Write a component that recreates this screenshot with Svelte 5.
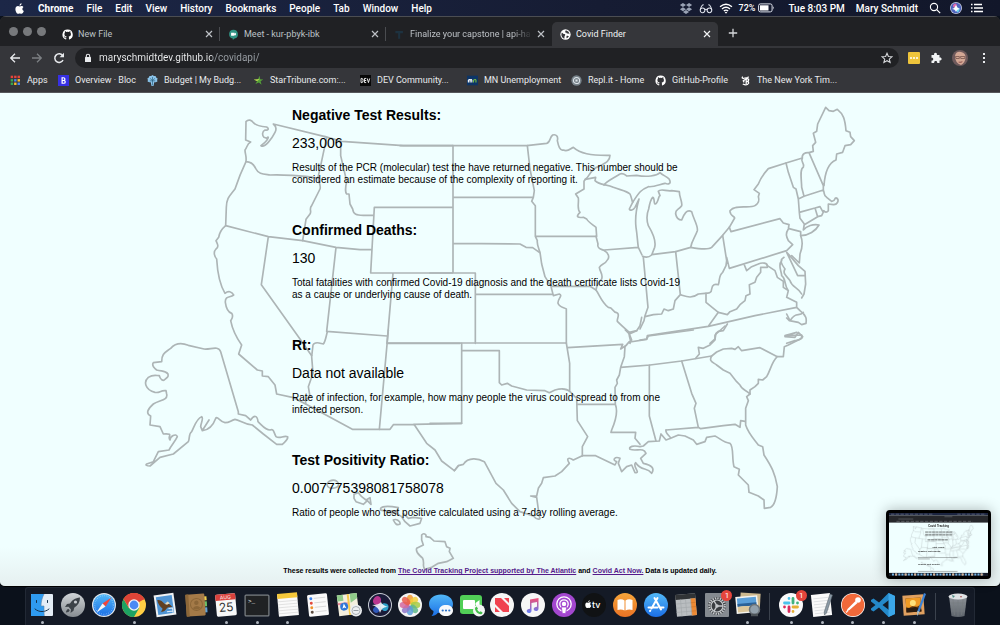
<script>
  const menus = ['File', 'Edit', 'View', 'History', 'Bookmarks', 'People', 'Tab', 'Window', 'Help'];

  const github = '<path fill="#fff" d="M8 .7a7.4 7.4 0 0 0-2.3 14.4c.4 0 .5-.2.5-.4v-1.5c-2 .5-2.500-.9-2.500-.9-.4-.9-.8-1.100-.8-1.100-.7-.5 0-.5 0-.5.8.1 1.200.8 1.200.8.7 1.200 1.900.8 2.300.6 0-.5.3-.8.5-1-1.700-.2-3.400-.8-3.400-3.700 0-.8.3-1.500.8-2 0-.2-.3-1 .1-2 0 0 .6-.2 2 .8a7 7 0 0 1 3.700 0c1.400-1 2-.8 2-.8.4 1 .1 1.800.1 2 .5.5.8 1.200.8 2 0 2.900-1.700 3.500-3.400 3.700.3.2.5.7.5 1.400v2.200c0 .2.100.5.500.4A7.400 7.400 0 0 0 8 .7z"/>';
  const meet = '<path fill="#2f9384" d="M8 1a6.500 6.500 0 0 1 1.500 12.800L7 16v-2.100A6.500 6.500 0 0 1 8 1z"/><path fill="#fff" d="M4.500 5.500h5v1.300l2-1.200v4l-2-1.200v1.300h-5z"/>';
  const trello = '<path fill="#1d3240" d="M2 3h11v3H9v8H6V6H2z"/>';
  const globe = '<circle cx="8" cy="8" r="7.500" fill="#fff"/><path fill="#35363a" d="M2.500 5c2 .5 2 2.500 4 2.300 1.500 0 1.500 1.700.3 2.700-.6.800 0 2.800-.6 4C3.500 13 1.800 10.500 2 8zM8 2c.2 1.500-.8 1.800-.5 2.700 1 .8 2 .3 2.200 1.500.4 1.300 2.600.3 3.900 1.300C14 4.500 11 2 8 2zM9.500 10c1.500-.8 2.500.2 3.500.3-.7 1.700-2 2.900-3.600 3.300z"/>';

  const tabs = [
    { title: 'New File', icon: github },
    { title: 'Meet - kur-pbyk-ibk', icon: meet },
    { title: 'Finalize your capstone | api-ha', icon: trello },
    { title: 'Covid Finder', icon: globe, active: true }
  ];

  const appColors = ['#e8453c', '#e8453c', '#e8453c', '#35a853', '#4688f1', '#f9bb2d', '#35a853', '#f9bb2d', '#4688f1'];
  const bookmarks = [
    { label: 'Apps', icon: appColors.map((c, i) => `<rect x="${1 + (i % 3) * 5}" y="${1 + Math.floor(i / 3) * 5}" width="3.500" height="3.500" fill="${c}"/>`).join('') },
    { label: 'Overview · Bloc', icon: '<rect width="16" height="16" fill="#3730e3"/><path fill="none" stroke="#fff" stroke-width="1.800" d="M6 4v8h2.500a2 2 0 0 0 0-4H6h2a2 2 0 0 0 0-4z"/>' },
    { label: 'Budget | My Budg...', icon: '<path fill="#8bc4ea" d="M8 0l2 1.500 2.500-.2.800 2.200 2.200 1.500-.8 2.200.5 2.300-2.500 1-2.200.2L9.500 16h-3l-1-5.300-2.200-.2-2.500-1 .5-2.300L.5 5l2.200-1.500.8-2.200 2.500.2z"/><path stroke="#2a607f" stroke-width="1" fill="none" d="M8 3v12M4.500 5L8 8l3.500-3M4 8.500h8"/>' },
    { label: 'StarTribune.com:...', icon: '<path fill="#55a038" d="M9.500 1l1 5 4.500.5-4 2.500 1.500 5-4-3-5 2 2.500-4z"/><path fill="#b8de50" d="M1 6.500l8.500-.7L6 9z"/>' },
    { label: 'DEV Community...', icon: '<rect width="16" height="16" fill="#080808"/><path fill="none" stroke="#fff" stroke-width="1.300" d="M1.500 5v6h1.300q1.700 0 1.700-3t-1.700-3zM9 5H6.500v6H9M6.500 8H9M10.500 5l1.800 6 1.800-6"/>' },
    { label: 'MN Unemployment', icon: '<rect y="1" width="16" height="14" fill="#0c3466"/><path fill="none" stroke="#fff" stroke-width="1.600" d="M2 11V7.500q2-1.500 2.500 0V11V7.500q2-1.500 2.500 0V11"/><path fill="none" stroke="#77be43" stroke-width="1.600" d="M9.500 11V7.500q3-2 3.500 0V11"/>' },
    { label: 'Repl.it - Home', icon: '<circle cx="8" cy="8" r="7.500" fill="#78838b"/><circle cx="8" cy="8" r="4.500" fill="none" stroke="#dce3e8" stroke-width="1.500"/><path fill="#dce3e8" d="M6.500 6.500h3v3h-3z"/>' },
    { label: 'GitHub-Profile', icon: github },
    { label: 'The New York Tim...', icon: '<path fill="none" stroke="#fff" stroke-width="1.800" d="M4 2.500Q2 5 5 5q2-1 4-1 3 1 3-2M9 4v9M5.500 7v4M4 13q6 3 8.500-1 .5-4-3.500-2 4 0 3.500-4Q9 5 4 9"/>' }
  ];

  const results = [
    { title: 'Negative Test Results:', value: '233,006', note: 'Results of the PCR (molecular) test the have returned negative. This number should be considered an estimate because of the complexity of reporting it.' },
    { title: 'Confirmed Deaths:', value: '130', note: 'Total fatalities with confirmed Covid-19 diagnosis and the death certificate lists Covid-19 as a cause or underlying cause of death.' },
    { title: 'Rt:', value: 'Data not available', note: 'Rate of infection, for example, how many people the virus could spread to from one infected person.' },
    { title: 'Test Positivity Ratio:', value: '0.007775398081758078', note: 'Ratio of people who test positive calculated using a 7-day rolling average.' }
  ];

  const petals = ['#f39b2e', '#f3cf3a', '#a6cb45', '#5fb98a', '#5b9fd8', '#8f78c9', '#d4689f', '#ea5d4c'];
  const dock = [
    { name: 'Finder', dot: true, art: '<rect x="1" y="1" width="22" height="22" rx="1" fill="#e4edf6"/><path fill="#2f9bf0" d="M1 2q0-1 1-1h12c-2 4-3 8-3 12h3v10H1z"/><path fill="none" stroke="#16324c" stroke-width="1" stroke-linecap="round" d="M6.500 7.500v2M17.500 7.500v2M5 16c4 3.500 10 3.500 14 0"/><path fill="none" stroke="#5d83a8" stroke-width=".6" d="M14 1c-2 4-3 8-3 12h3c0 4 0 7 .5 10"/>' },
    { name: 'Launchpad', art: '<circle cx="12" cy="12" r="12" fill="url(#silver)"/><path fill="#3c4248" d="M19 4.500c-5 .3-8 3-10 6L6 11l-2 3 3.500-.2L10 16.500l-.5 3.500 3-2.200.7-3C17 12.500 19 9 19 4.500zM7.500 16c-1.500 0-2.500 2-2.500 3.500 1.500 0 3.500-.8 3.700-2.200z"/><circle cx="14.500" cy="9" r="1.600" fill="#c8ccd0"/>' },
    { name: 'Safari', art: '<circle cx="12" cy="12" r="12" fill="#dfe6ec"/><circle cx="12" cy="12" r="10.800" fill="url(#azure)"/><circle cx="12" cy="12" r="9.300" fill="none" stroke="#b8e2fb" stroke-width="1.200" stroke-dasharray=".4 1.500"/><path fill="#f2453a" d="M19.500 4.500l-9 6 3 3z"/><path fill="#f6f6f6" d="M4.500 19.500l9-6-3-3z"/>' },
    { name: 'Chrome', dot: true, art: '<circle cx="12" cy="12" r="12" fill="#ffce44"/><path fill="#dc4437" d="M12 12L1.600 6A12 12 0 0 1 22.400 6z"/><path fill="#1da362" d="M12 12L6.800 15 1.600 6A12 12 0 0 0 12 24l5.200-9z"/><path fill="#dc4437" d="M1.600 6L7 15l5-8.500h10.700L22.400 6A12 12 0 0 0 1.600 6z"/><circle cx="12" cy="12" r="5.700" fill="#f5f5f5"/><circle cx="12" cy="12" r="4.400" fill="#4a8af4"/>' },
    { name: 'Mail', art: '<g transform="rotate(-8 12 12)"><rect x="2" y="1" width="20" height="22" fill="#eef1f3"/><rect x="4" y="3" width="16" height="18" fill="#4f94d4"/><path fill="#614022" d="M5 6c3 0 5 2 7 5 2-1 5 0 7 4-3 0-5-1-6 1-2 2-4 3-6 2 1-1 2-2 2-3-2-2-4-5-4-9z"/><path fill="#e8dcc0" d="M12 11l3-2 2 2-3 1z"/><path fill="none" stroke="#e4eef8" d="M13 19h6M15 16h4v5"/></g>' },
    { name: 'Contacts', art: '<g transform="rotate(-4 12 12)"><path fill="#f1d14c" d="M19 4h4v4h-4z"/><path fill="#6cc067" d="M19 9h4v5h-4z"/><path fill="#62a3d9" d="M19 15h4v5h-4z"/><rect x="2" y="1" width="19" height="22" rx="1" fill="#a47a48"/><path fill="#8b6638" d="M2 1h3v22H2z"/><circle cx="12.500" cy="11.500" r="6" fill="none" stroke="#8b6638"/><circle cx="12.500" cy="9.800" r="2.200" fill="#8b6638"/><path fill="#8b6638" d="M8.500 15q4-4 8 0-4 3-8 0z"/></g>' },
    { name: 'Calendar', dot: true, art: '<g transform="rotate(-5 12 12)"><rect x="2" y="1" width="20" height="22" rx="1.500" fill="#f8f8f8"/><path fill="#d9413c" d="M2 7V2q0-1 1-1h18q1 0 1 1v5z"/><text x="12" y="6" font-size="5" text-anchor="middle" fill="#fff" font-family="Inter, sans-serif">AUG</text><text x="12" y="18.500" font-size="12" text-anchor="middle" fill="#333" font-family="Inter, sans-serif">25</text></g>' },
    { name: 'Terminal', dot: true, art: '<rect x="-.5" y="1.500" width="25" height="22" rx="1.500" fill="#7f8489"/><rect x=".7" y="2.700" width="22.600" height="19.600" fill="#202224"/><text x="3" y="9.500" font-size="6" fill="#fff" font-family="Liberation Mono, monospace">&gt;_</text>' },
    { name: 'Notes', dot: true, art: '<g transform="rotate(-5 12 12)"><rect x="2" y="1" width="20" height="22" fill="#fafafa"/><path fill="#f5c83a" d="M2 0h20v5H2z"/><path stroke="#d2d2d2" stroke-width=".6" d="M2 8h20M2 11h20M2 14h20M2 17h20M2 20h20"/></g>' },
    { name: 'Reminders', art: '<g transform="rotate(-6 12 12)"><rect x="2" y="1" width="20" height="22" rx="1.500" fill="#fafafa"/><path stroke="#d2d2d2" stroke-width=".8" d="M8.500 5H20M8.500 9.500H20M8.500 14H20M8.500 18.500H20"/><circle cx="5.500" cy="5" r="1.500" fill="#3b82ec"/><circle cx="5.500" cy="9.500" r="1.500" fill="#e24a3e"/><circle cx="5.500" cy="14" r="1.500" fill="#f0932e"/><circle cx="5.500" cy="18.500" r="1.500" fill="#5a4a3e"/></g>' },
    { name: 'Maps', art: '<g transform="rotate(-7 12 12)"><rect x="1" y="1" width="20" height="21" fill="#f3eedd"/><path fill="#8fcb8a" d="M1 1h6v6H1zM14 1h7v5l-7 4z"/><path fill="#f6c94b" d="M11 1h2v21h-2z"/><path fill="#ea8b98" d="M1 9h10v2H1z"/><circle cx="7" cy="13" r="4" fill="#2f77d8"/><path fill="#fff" d="M7 10l2 5-2-1-2 1z"/></g><circle cx="19" cy="17.500" r="6" fill="#eceff1"/><circle cx="19" cy="17.500" r="4" fill="none" stroke="#9aa0a6" stroke-width=".8"/><path stroke="#9aa0a6" d="M16.500 17.500h5"/>' },
    { name: 'Siri', art: '<circle cx="12" cy="12" r="12" fill="#c9ced6"/><circle cx="12" cy="12" r="11" fill="#191b38"/><path fill="#b8368f" d="M12 12C5 13 3 8 7 4c4-3 8 1 5 8z"/><path fill="#2fa0c9" d="M12 12c6-4 10 0 8 4s-7 2-8-4z"/><path fill="#2f58b8" d="M12 12c-5 1-9 4-6 7s7-1 6-7z"/><path fill="#fff" d="M4 12q7 0 9-3 1 3 7 5-6-1-8 6-1-6-8-8z" opacity=".85"/>' },
    { name: 'Photos', art: '<circle cx="12" cy="12" r="12" fill="#f4f4f4"/>' + petals.map((c, i) => `<ellipse cx="12" cy="6.500" rx="3.200" ry="4.800" fill="${c}" opacity=".85" transform="rotate(${i * 45} 12 12)"/>`).join('') },
    { name: 'Messages', art: '<path fill="url(#azure)" d="M12 1.500c7 0 12 4 12 9.500s-5 9-12 9c-1 0-2 0-3-.3C7 22 5 23 2.500 23c1.500-1.500 2-3 2-5C1.500 16.500 0 14 0 11c0-5.500 5-9.500 12-9.500z"/><path fill="#f7f9fb" d="M17 12c4 0 7 2 7 5.500S21 23 17 23s-7-2-7-5.500 3-5.500 7-5.500z"/><circle cx="13.700" cy="17.500" r="1.100" fill="#2c71c8"/><circle cx="17" cy="17.500" r="1.100" fill="#2c71c8"/><circle cx="20.300" cy="17.500" r="1.100" fill="#2c71c8"/>' },
    { name: 'FaceTime', art: '<rect y="2" width="22" height="19" rx="3" fill="#51cf57"/><path fill="#fff" d="M4 7h10q1 0 1 1v7q0 1-1 1H4q-1 0-1-1V8q0-1 1-1zM15.500 10l4-3v8l-4-3z"/><circle cx="19" cy="17.500" r="6" fill="#f4f6f5"/><path fill="#43bd4b" d="M16.500 13.500l1.500 2-.8 1c.5 1.200 1.300 2 2.500 2.500l1-.8 2 1.500c-1 2-2.500 2-4.500.8s-3.300-3.500-3.200-5q.3-1.500 1.500-2z"/>' },
    { name: 'News', art: '<circle cx="12" cy="12" r="12" fill="#f6f6f6"/><path fill="#f0424f" d="M5 5h6l8 8v6h-6l-8-8zM14 5h5v5zM5 14v5h5z"/>' },
    { name: 'Music', art: '<circle cx="12" cy="12" r="12" fill="#f6f6f6"/><path fill="url(#tune)" d="M9 6.500L17.500 5v10.500c0 3.300-4.800 3.300-4.800.6 0-1.500 1.500-2 3.300-2.300V9l-5.500 1v7.500c0 3.300-4.800 3.300-4.800.6 0-1.500 1.500-2 3.300-2.300z"/>' },
    { name: 'Podcasts', art: '<circle cx="12" cy="12" r="12" fill="#a347cf"/><circle cx="12" cy="11" r="7.200" fill="none" stroke="#fff" stroke-width="1.300"/><circle cx="12" cy="11" r="4.200" fill="none" stroke="#fff" stroke-width="1.300"/><circle cx="12" cy="11" r="2.200" fill="#fff"/><path fill="#fff" stroke="#a347cf" stroke-width=".8" d="M9.300 14h5.400l-1 6.500h-3.400z"/>' },
    { name: 'TV', art: '<circle cx="12" cy="12" r="12" fill="#101214"/><path fill="#fff" d="M7 9.500c1-.6 2 0 2 .3-1.200.8-.9 2.500.3 3-.5 1.300-1.200 2.200-1.900 2.200-.5 0-.7-.3-1.200-.3s-.8.3-1.200.3C3.700 15 2.500 11.300 4 10c1-.9 1.800-.2 2.400-.2zM6.200 9.200c0-1 .6-1.700 1.500-1.900 0 1-.6 1.800-1.500 1.900z"/><text x="10" y="15" font-size="9" font-weight="500" fill="#fff" font-family="Inter, sans-serif">tv</text>' },
    { name: 'Books', art: '<circle cx="12" cy="12" r="12" fill="url(#amber)"/><path fill="#fff" d="M4.500 7q4-1.500 7 .5v10q-3-1.500-7-.5zM19.500 7q-4-1.500-7 .5v10q3-1.500 7-.5z"/>' },
    { name: 'App Store', art: '<circle cx="12" cy="12" r="12" fill="url(#azure)"/><path fill="none" stroke="#fff" stroke-width="2" stroke-linecap="round" d="M13.500 5l-6 10.500M10.500 5l6.500 11.500M4.500 14.500h9M17 14.500h2.500M6 18l.3-.5"/>' },
    { name: 'Calculator', art: '<g transform="rotate(-5 12 12)"><rect x="2" y="1" width="20" height="22" fill="#b9bdc0"/><path fill="#303336" d="M2 1h20v5H2z"/><path fill="#ee8a34" d="M17 6h5v17h-5z"/><path stroke="#a2a6a9" stroke-width=".6" d="M7 6v17M12 6v17M17 6v17M2 10.200h15M2 14.400h15M2 18.600h15"/><path stroke="#c9752c" stroke-width=".6" d="M17 10.200h5M17 14.400h5M17 18.600h5"/></g>' },
    { name: 'System Preferences', badge: 1, art: '<rect width="24" height="24" rx="1" fill="#858a90"/><circle cx="12" cy="13" r="9" fill="#3a3d41"/><circle cx="12" cy="13" r="7.800" fill="none" stroke="#c5c8cb" stroke-width="2" stroke-dasharray="1.500 .950"/><circle cx="12" cy="13" r="6" fill="none" stroke="#c5c8cb" stroke-width="1.200"/><path stroke="#c5c8cb" stroke-width="1.400" d="M12 13h6M12 13L9 7.800M12 13l-3 5.200"/><circle cx="12" cy="13" r="1.800" fill="#c5c8cb"/>' },
    { name: 'Preview', dot: true, art: '<g transform="rotate(3 12 12)"><rect x="4" y="0" width="20" height="18" fill="#cdb98f"/></g><g transform="rotate(-5 12 12)"><rect y="3" width="22" height="17" fill="#f4f4f0"/><path fill="#5a9fd9" d="M1.500 4.500h19v7h-19z"/><path fill="#2b6298" d="M1.500 10h19v3h-19z"/><path fill="#dcc79b" d="M1.500 13q9-1 19 2v3.500h-19z"/></g><circle cx="18.500" cy="16.500" r="5" fill="#93a1ac" stroke="#6a7278" stroke-width="1.500"/><path stroke="#4c5358" stroke-width="2.500" d="M15 22h7"/>' },
    { separator: true },
    { name: 'Slack', dot: true, badge: 1, art: '<circle cx="12" cy="12" r="12" fill="#fbfbfb"/><g stroke-width="2.800" stroke-linecap="round"><path stroke="#4cc3ec" d="M10 5.500v.1M5.500 10H10"/><path stroke="#40b27d" d="M18.500 10v.1M14 5.500V10"/><path stroke="#e5b034" d="M14 18.500v.1M14 14h4.500"/><path stroke="#da2b5c" d="M5.500 14v.1M10 14v4.500"/></g>' },
    { name: 'TextEdit', dot: true, art: '<g transform="rotate(-6 12 12)"><rect x="2" y="1" width="19" height="22" fill="#fafafa"/><path stroke="#cfd2d5" stroke-width=".6" d="M4 5h15M4 8h15M4 11h15M4 14h15M4 17h15M4 20h15"/></g><path fill="#8b99a5" stroke="#4c565f" stroke-width=".5" d="M20 1l2.500 1-6 18-2 2-.3-3z"/>' },
    { name: 'Postman', dot: true, art: '<circle cx="12" cy="12" r="12" fill="#fff"/><circle cx="12" cy="12" r="11.300" fill="#f1693a"/><circle cx="17" cy="7" r="2.800" fill="#fff"/><path fill="#fff" d="M14.500 8l2 2-8 7-3 1.500 1-2.500zM4.500 18.500l3-.5-2 2z"/>' },
    { name: 'VS Code', dot: true, art: '<path fill="#2489ca" fill-rule="evenodd" d="M17.500 0L24 3v18l-6.500 3L8 14.500 2.500 18.500 0 17v-1.500L4.500 12 0 8.500V7l2.500-1.500L8 9.500zM18 7l-6.500 5 6.500 5z"/><path fill="#3ba7ea" d="M17.500 0L24 3v18l-6.500 3z"/>' },
    { name: 'Pixelmator', dot: true, art: '<g transform="rotate(-4 12 12)"><rect x="1" y="2" width="21" height="20" fill="#e0a060"/><rect x="4" y="5" width="15" height="14" fill="#5a3413"/><path fill="#f09a24" d="M4 5h15v7l-4 2-5-1-6 3z"/><circle cx="11" cy="10" r="3" fill="#ffe17a"/><path fill="#2c1c10" d="M4 14l5 1 4-1 6 3v2H4z"/></g><path fill="#3b82d6" d="M22 0l2 1-7 19-2 3 0-4z"/><path fill="#e8d3a6" d="M15.500 18l1.700.7L15 23z"/>' },
    { separator: true },
    { name: 'Trash', art: '<path fill="url(#silver)" d="M3 3h18l-2.500 20q-6.500 2-13 0z" opacity=".65"/><ellipse cx="12" cy="3.500" rx="9.500" ry="3" fill="#dfe2e4"/><path fill="none" stroke="#777c80" stroke-width=".6" d="M7 7l1.500 15M12 7v16M17 7l-1.500 15M4 10h16M4.500 14h15M5 18h14"/><path fill="#4e8d86" d="M6 2l3 1-2 2z"/><path fill="#a55" d="M14 3l2 0-1 2z"/>' }
  ];
</script>

{#snippet usMap()}
  <g fill="none" stroke="#adb5b6" stroke-linejoin="round" stroke-linecap="round">
    <g transform="translate(130 94) scale(.33333)">
      <path d="M348 83C355 75 365 78 370 86C380 96 395 98 410 99C418 104 415 110 405 108C396 112 396 125 402 130L410 133C420 122 412 140 404 146L393 155C405 162 425 135 435 115C442 102 436 95 430 90L585 128M348 83L347 138L362 144C350 150 352 160 345 168C345 180 350 185 348 203C365 203 372 212 378 225C385 240 400 240 420 243C450 241 520 245 562 252M590 130L572 215L564 250C566 265 574 278 570 285L545 335C536 345 546 352 540 360L528 376L518 440" />
      <path d="M348 203C335 230 325 255 315 285C300 305 290 310 289 340L287 395L415 428L518 440L618 460L690 467L724 467M585 128L635 142L820 155H969M632 145V185L650 262C645 285 647 298 650 300H657L660 330L668 345C670 362 680 363 700 364H732M733 340H967M722 537L733 340M722 537H967M618 460L590 712L771 726M789 538L771 748M415 428L394 572L510 735L545 785" />
      <path d="M287 395C275 405 268 418 266 430L258 440C262 450 268 458 258 465C248 475 255 490 260 495C262 530 268 570 285 598C295 590 305 592 311 603C300 612 285 605 286 625C288 640 295 655 305 658C312 668 305 675 302 680C308 710 322 735 335 753L326 780L382 828L397 831V846L415 848L435 873L440 900L487 910L527 930L667 1006H780L790 992H852" />
    </g>
    <g transform="translate(430 94) scale(.33333)">
      <path d="M-90 155H290L350 148C362 145 358 130 368 123C380 120 385 128 382 140C385 155 390 172 400 168C415 175 422 162 430 160C450 178 480 185 540 184C540 200 530 205 505 218C480 225 478 250 466 256L462 262V285L437 300L445 312C447 330 440 345 450 355C435 370 445 372 460 370L470 375C475 385 490 393 498 400L500 427" />
      <path d="M292 155L300 225L313 290L310 310L305 322L316 335V427H498M70 310H310M69 155V537M69 448L270 450L288 460L308 461L328 475M316 427L322 440C320 450 325 460 330 475L335 510L345 548L363 577H480L498 588M0 537H136V748M136 601H365M363 577L370 605L388 600C400 605 382 615 384 628C388 640 400 640 409 645V748M-128 747H409" />
      <path d="M498 427L504 450C500 465 515 465 523 470C535 475 540 490 532 498C525 512 515 508 508 520C510 535 520 540 515 555C505 565 500 575 498 588C510 605 515 625 535 640C550 640 548 655 560 656C572 660 560 672 562 682C575 695 590 708 598 715C595 730 605 735 600 748M523 468L625 460M466 256L497 250L495 260C510 275 530 270 550 280C570 288 590 290 600 300C605 310 605 318 608 325L598 345C600 352 610 348 615 340L627 315C620 340 615 375 618 400C622 425 622 440 625 460L636 483" />
      <path d="M598 715L620 710L630 695L635 670" />
    </g>
    <g transform="translate(570 150) scale(.33333)">
      <path d="M102 105C110 92 130 85 145 75C158 64 165 75 170 78L200 76C230 82 260 78 270 68C280 78 290 78 298 88C305 102 295 104 285 100C265 105 250 112 235 110C215 118 208 125 188 157" />
    </g>
    <g transform="translate(640 94) scale(.33333)">
      <path d="M60 305L55 292C62 282 80 293 95 290L118 293C118 310 128 325 125 335C115 350 105 345 107 360C110 375 120 378 125 378C132 360 140 345 155 353C160 375 175 395 172 410C165 430 155 440 152 460M60 305C55 305 55 328 46 330C40 330 45 310 38 310C30 320 28 335 26 345C20 360 20 380 25 395C40 420 48 445 44 460L35 483C25 492 15 490 8 487M35 482L107 473L152 460C180 465 205 468 215 460L248 424L268 400L284 372C285 368 268 365 270 350C285 330 330 345 345 335C360 325 357 315 355 308L358 298L342 287L355 270C365 245 375 235 385 224L438 207L487 192" />
      <path d="M10 490L24 640L15 665L12 680L0 705M107 473L121 602M15 668L40 662L65 660L72 645L85 650L100 645L105 620L121 602C140 608 155 615 175 600L195 598C205 598 215 598 215 585C217 570 225 570 235 572C240 560 235 545 248 535L258 515L260 500L248 424M268 400L273 413L420 374L430 387L447 392L445 405C435 420 440 430 445 440L458 452L440 470L268 523L260 490" />
      <path d="M447 404L482 413V425C490 445 488 460 480 480L478 507L455 485M198 598V625L235 655L262 662L270 653L290 645L300 632L315 620L318 605L330 600L328 572L345 565L350 550L362 535V520L382 520C385 505 365 505 355 510L335 518L320 530L313 513" />
      <path d="M382 515L405 530L412 550L430 562V580L445 590L440 610L470 625V640L480 650M432 490C415 500 428 515 435 525C425 540 445 550 450 560C455 580 475 580 485 600M425 500C412 515 425 530 425 545C440 555 430 570 445 590M440 475L473 545H495M440 475L452 488L475 515L495 532L497 570L492 600L485 612M0 738L20 735L22 725L205 697L345 665L470 640M235 655L205 697M210 748L225 735L228 718L235 712L250 710L262 690M440 660L450 680C470 650 475 670 490 655M480 650C500 665 500 675 498 688L485 692L475 685L448 680L440 672M435 728L465 730L475 715L488 728C480 740 475 738 465 740L440 748" />
      <path d="M438 207L445 235L460 280L468 285L475 315L478 355L480 373L493 390L490 408C500 395 520 390 537 393C528 410 505 425 482 425M487 192C480 205 495 205 490 220C478 225 485 260 485 280L492 307M487 192C485 180 495 175 507 176L550 275V288M475 315L492 307L550 288M478 355L525 342L540 338M525 342L533 368L545 365L552 350M493 392L533 368M550 288C555 300 550 305 560 310L575 322C590 320 580 310 590 312C600 320 590 333 580 332L565 330V350C556 362 550 345 548 352L540 338M507 176L520 172L518 155L527 145L520 118L530 112L533 90L557 40L567 50L580 52L592 46C610 60 615 75 618 110L630 115L632 128L643 140L632 152L615 155L608 175L590 180L588 198C570 205 555 230 552 275" />
    </g>
    <g transform="translate(130 330) scale(.33333)">
      <path d="M592 5C588 20 586 35 580 42C570 40 555 32 549 45L545 80L549 130L535 170L540 200L527 210V222M775 0L748 298M773 40H990" />
      <path d="M995 280L852 283L890 340L915 360L935 393L973 422L985 407" />
      <path d="M95 95C95 70 105 68 122 55C140 35 160 40 175 46L222 57C240 60 265 45 272 65L325 245V252L347 257L362 270C372 255 382 255 384 275C400 290 405 300 420 300C432 296 430 305 438 320C450 328 460 315 473 320C475 330 465 335 457 343H440L400 312L367 285C340 282 330 270 315 268C300 272 300 278 285 278C270 275 265 260 258 263C250 285 235 300 217 302L212 290C212 280 222 265 215 260C200 265 195 285 185 305C175 312 180 325 175 335L130 372L90 382L60 408C50 408 45 405 50 402L70 395L85 365L117 360C125 345 135 335 142 320C138 308 120 320 120 330C110 318 135 310 100 312L90 290L60 285L62 258C45 250 55 235 70 222C85 210 115 212 110 192L108 182C90 180 90 190 75 187C45 180 40 155 55 142C70 132 80 137 88 137C90 148 100 155 105 148C115 140 115 140 114 132C105 120 95 125 80 120C70 112 65 105 70 98ZM218 300L237 270" />
      <path d="M592 460C600 447 620 447 625 460C628 472 615 475 605 475C595 475 590 468 592 460M672 493L685 488L695 500L708 510L720 503L723 523L712 512L700 523L678 515L672 505ZM752 535C760 525 790 530 805 533L800 545C785 540 765 545 752 540ZM775 548L800 550L815 560L825 575L840 588L870 580L875 565L850 562L835 565L820 550M790 570C800 565 812 575 810 582C800 588 795 580 790 570M875 615C880 608 890 612 888 620L900 622L912 633L945 635L950 650L960 655L958 665L970 685L950 695L925 700L905 712L885 718C875 710 885 700 878 685C870 675 855 670 860 655L880 645L875 630Z" />
    </g>
    <g transform="translate(430 330) scale(.33333)">
      <path d="M95 40V280H0M95 61L208 62V158L215 165L232 160L245 168L290 180L345 182L358 188L375 180C400 173 415 180 420 185L440 205L442 272L473 320L457 350V378M409 39L419 100V183M412 53L578 43L572 57L590 45M442 223H556M598 35L585 50L583 80L572 112L568 135L560 150L562 160L555 172L556 223C565 245 558 270 545 300L543 307H617L615 325L630 343M600 36L650 28L655 18L790 0M572 112L660 105L755 93L845 78M586 0L598 12L605 30L600 36M598 12L620 2" />
      <path d="M658 105V258L678 333M755 93L785 190L798 220L793 235L805 292M708 300L805 292L812 296L880 287L915 283L930 292L932 272L945 274M845 78L860 66L880 57L905 55L915 58L925 50L935 62L990 53L1042 80C1025 95 1022 120 1010 140L998 150L985 148V160L975 170L960 180V192C950 180 935 180 930 165L920 155L900 130L880 120L860 105C850 97 835 95 845 78M797 85L808 72L805 52L820 55L840 45L855 30V15L885 -12M1042 80H1060L1063 50L1075 45L1115 25V15L1065 17L1100 7" />
      <path d="M960 192L950 200L955 212L947 235V285C955 310 970 325 985 345L998 350L1002 375C1025 410 1035 430 1042 470C1040 505 1035 525 1022 532L1003 535L1002 510L985 498L957 487L955 465L940 450L925 435L928 418L912 410C905 385 912 350 900 340C880 338 870 325 855 318L830 322L825 335L800 343L790 330L765 318L745 315L722 325L708 330L693 312L688 333L655 335L640 348L630 350C610 345 595 350 600 358C620 365 640 350 648 370L632 385L640 400C665 405 675 415 665 430C650 410 635 425 617 398C605 408 635 430 615 428L605 405L590 410L575 425L565 400L570 385C555 378 545 390 560 395L555 405L497 377H457L430 390C415 380 408 385 418 400L395 425L375 438L340 443L335 460L325 475L320 498H302L320 502L328 560C335 570 320 570 310 558L270 545L245 520L220 480L198 460L163 395C145 385 115 380 100 403L85 407L73 422M708 300C705 310 722 320 722 325" />
    </g>
  </g>
{/snippet}

<svg class="defs" aria-hidden="true">
  <linearGradient id="silver" x2="0" y2="1"><stop stop-color="#d0d4d7" /><stop offset="1" stop-color="#868c91" /></linearGradient>
  <linearGradient id="azure" x2="0" y2="1"><stop stop-color="#52b8f7" /><stop offset="1" stop-color="#1b6fe6" /></linearGradient>
  <linearGradient id="amber" x2="0" y2="1"><stop stop-color="#f6a53a" /><stop offset="1" stop-color="#ea7325" /></linearGradient>
  <linearGradient id="tune" x2="0" y2="1"><stop stop-color="#f44e74" /><stop offset="1" stop-color="#5f7df5" /></linearGradient>
</svg>

<div class="desktop">
  <header class="menubar">
    <svg class="apple" viewBox="0 0 16 16" aria-hidden="true"><path fill="#fff" d="M10.900 4.200c1.300 0 2.300.7 2.900 1.500-2.500 1.500-2 4.900.5 5.900-.7 2-2 4.100-3.500 4.100-1 0-1.300-.6-2.500-.6s-1.600.6-2.500.6C3.900 15.700 2 12 2 9c0-3 1.900-4.700 3.800-4.700 1.100 0 2 .7 2.600.7s1.500-.8 2.500-.8zM8.100 3.900C8 2 9.300.4 11 .2c.2 1.900-1.300 3.600-2.900 3.700z" /></svg>
    <button class="app">Chrome</button>
    {#each menus as m}<button>{m}</button>{/each}
    <div class="status">
      <svg class="i14" viewBox="0 0 14 14"><path fill="#9aa3b5" d="M3.700 1L7 3.200 3.700 5.400.4 3.200zM10.300 1l3.300 2.200-3.300 2.200L7 3.200zM3.700 5.600L7 7.800 3.700 10 .4 7.800zM10.300 5.600l3.300 2.200-3.300 2.200L7 7.800zM3.700 10.800L7 8.600l3.300 2.200L7 13z" /></svg>
      <svg class="i14" viewBox="0 0 14 14"><g fill="none" stroke="#dfe3ec" stroke-width="1.100"><circle cx="3.300" cy="9" r="2.500" /><circle cx="10.700" cy="9" r="2.500" /><path d="M5.600 8.500q1.400-1.200 2.800 0M.8 8.800Q2 3 4.500 3M13.200 8.800Q12 3 9.500 3" /></g></svg>
      <svg class="i14" viewBox="0 0 14 14"><g fill="none" stroke="#fff" stroke-width="1.500"><path d="M.6 5.200q6.400-5.400 12.800 0M2.700 7.500q4.300-3.600 8.600 0M4.700 9.700q2.300-1.900 4.600 0" /></g><path fill="#fff" d="M5.600 11q1.400-1 2.800 0L7 12.700z" /></svg>
      <span class="percent">72%</span>
      <svg class="battery" viewBox="0 0 17 10"><rect x=".6" y=".9" width="13.500" height="8" rx="1.800" fill="none" stroke="#dfe3ec" stroke-width="1" /><rect x="2" y="2.300" width="8.500" height="5.200" fill="#fff" /><path fill="#dfe3ec" d="M15 3.300q1.600 1.600 0 3.200z" /></svg>
      <button class="clock">Tue 8:03 PM</button>
      <button class="user">Mary Schmidt</button>
      <button class="glyph" aria-label="Search"><svg viewBox="0 0 12 12"><circle cx="5" cy="5" r="3.600" fill="none" stroke="#fff" stroke-width="1.100" /><path stroke="#fff" stroke-width="1.200" d="M7.700 7.700l3.500 3.500" /></svg></button>
      <button class="glyph siri" aria-label="Siri"><svg viewBox="0 0 12 12"><circle cx="6" cy="6" r="6" fill="#c5cbe0" /><circle cx="6" cy="6" r="5.200" fill="#4d63bd" /><path fill="#e069ac" d="M6 6Q1 5 4 2q4-2 2 4z" /><path fill="#6ad7ee" d="M6 6q5-1 3 3T6 6z" /><path fill="#fff" d="M2 7q3-1 4-4 1 3 4 4-3 0-4 3-1-3-4-3z" /></svg></button>
      <button class="glyph" aria-label="Notifications"><svg viewBox="0 0 12 12"><path stroke="#fff" stroke-width="1.500" d="M0 2.500h1.500M0 6h1.500M0 9.500h1.500M3 2.500h8M3 6h9M3 9.500h9" /></svg></button>
    </div>
  </header>

  <div class="window">
    <div class="tabstrip">
      <div class="lights"><i></i><i></i><i></i></div>
      {#each tabs as t}
        <div class="tab" class:active={t.active}>
          <svg viewBox="0 0 16 16" aria-hidden="true">{@html t.icon}</svg>
          <button class="title">{t.title}</button>
          <button class="close" aria-label="Close {t.title}"><svg viewBox="0 0 8 8"><path stroke="currentColor" stroke-width="1.200" d="M1 1l6 6M7 1L1 7" /></svg></button>
        </div>
      {/each}
      <button class="plus" aria-label="New tab"><svg viewBox="0 0 10 10"><path stroke="#d5d7da" stroke-width="1.300" d="M5 .8v8.400M.8 5h8.400" /></svg></button>
    </div>

    <div class="toolbar">
      <button class="nav" aria-label="Back"><svg viewBox="0 0 12 12"><path fill="none" stroke="#e8eaed" stroke-width="1.300" d="M11 6H2M6 1.700L1.700 6 6 10.300" /></svg></button>
      <button class="nav" aria-label="Forward"><svg viewBox="0 0 12 12"><path fill="none" stroke="#7d8084" stroke-width="1.300" d="M1 6h9M6 1.700L10.300 6 6 10.300" /></svg></button>
      <button class="nav" aria-label="Reload"><svg viewBox="0 0 12 12"><path fill="none" stroke="#e8eaed" stroke-width="1.500" d="M10 8A4.300 4.300 0 1 1 9.600 3.600" /><path fill="#e8eaed" d="M11 .8v4.400H6.600z" /></svg></button>
      <div class="omnibox">
        <svg class="lock" viewBox="0 0 8 10"><rect x="1" y="4" width="6" height="5" rx=".6" fill="#e8eaed" /><path fill="none" stroke="#e8eaed" stroke-width="1.100" d="M2.300 4.300V3a1.700 1.700 0 0 1 3.400 0v1.300" /></svg>
        <input aria-label="Address" value="maryschmidtdev.github.io/covidapi/" />
        <button aria-label="Bookmark this page"><svg viewBox="0 0 12 12"><path fill="none" stroke="#d5d7da" stroke-width="1.100" d="M6 1.300l1.400 3.200 3.500.3-2.600 2.300.8 3.400L6 8.700l-3.100 1.800.8-3.400L1.100 4.800l3.500-.3z" /></svg></button>
      </div>
      <div class="actions">
        <button aria-label="Extension"><svg viewBox="0 0 12 12"><rect width="12" height="12" rx="1" fill="#eec43b" /><path fill="#fff" d="M2 5.200h2v1.600H2zM5 5.200h2v1.600H5zM8 5.200h2v1.600H8z" /></svg></button>
        <button aria-label="Extensions"><svg viewBox="0 0 12 12"><path fill="#f1f3f4" d="M1.500 3h2.600C3.800 1.500 4.500.7 5.500.7S7.200 1.500 6.900 3h2.600v2.600c1.500-.3 2.100.5 2.100 1.400s-.6 1.700-2.100 1.400V11H7.200c.2-1.300-.6-1.900-1.500-1.900s-1.700.6-1.500 1.900H1.500V8.600c1.200.2 1.800-.6 1.800-1.500S2.700 5.500 1.500 5.700z" /></svg></button>
        <button class="avatar" aria-label="Profile"><svg viewBox="0 0 16 16"><circle cx="8" cy="8" r="8" fill="#6f5a5c" /><path fill="#d4a895" d="M3 6q1-5 6-4 5 1 4.500 6T9 15Q3 13 3 6z" /><path fill="none" stroke="#6b4a45" stroke-width=".7" d="M3.500 6.500h3.800v2H4zM8.500 6.500h4.300v2H8.800z" /><path stroke="#b06a64" d="M6.500 12q2 1 4-.3" /></svg></button>
        <button aria-label="Menu"><svg viewBox="0 0 12 12"><path fill="#e8eaed" d="M5 1h2v2H5zM5 5h2v2H5zM5 9h2v2H5z" /></svg></button>
      </div>
    </div>

    <nav class="bookmarks">
      {#each bookmarks as b}
        <a href="#top"><svg viewBox="0 0 16 16" aria-hidden="true">{@html b.icon}</svg>{b.label}</a>
      {/each}
    </nav>

    <main id="top">
      <svg class="map" viewBox="0 93 1000 493" stroke-width="5" aria-hidden="true">{@render usMap()}</svg>
      <div class="results">
        {#each results as r}
          <section>
            <h2>{r.title}</h2>
            <p class="value">{r.value}</p>
            <p class="note">{r.note}</p>
          </section>
        {/each}
      </div>
      <p class="credit">These results were collected from <a href="#atlantic">The Covid Tracking Project supported by The Atlantic</a> and <a href="#actnow">Covid Act Now.</a> Data is updated daily.</p>
    </main>
  </div>

  <nav class="dock" aria-label="Dock">
    {#each dock as d}
      {#if d.separator}
        <span class="sep"></span>
      {:else}
        <button aria-label={d.name} class:running={d.dot}>
          <svg viewBox="0 0 24 24">{@html d.art}</svg>
          {#if d.badge}<span class="badge">{d.badge}</span>{/if}
        </button>
      {/if}
    {/each}
  </nav>

  <div class="preview">
    <svg viewBox="0 0 1000 640" aria-hidden="true">
      <rect width="1000" height="640" fill="#f0ffff" />
      <rect width="1000" height="24" fill="#1b2440" /><rect y="24" width="1000" height="73" fill="#26272b" />
      <path stroke="#b9bcc4" stroke-width="7" stroke-dasharray="34 14" d="M20 12h420M690 12h290M75 84h770" opacity=".5" />
      <path stroke="#8d9096" stroke-width="7" d="M95 61h150M560 38h80" opacity=".6" />
      <g stroke-width="16" opacity=".6" transform="translate(0 15)">{@render usMap()}</g>
      <g fill="#222" font-family="Liberation Sans, sans-serif" font-weight="bold">
        <text x="500" y="142" font-size="30" text-anchor="middle">Covid Tracking</text>
        <g stroke="#333"><path stroke-width="10" stroke-dasharray="30 5" d="M365 194h275M365 222h270M390 272h210" opacity=".8" /><path stroke-width="6" d="M292 450h400M292 464h120M292 590h400" opacity=".6" /></g>
        <text x="500" y="354" font-size="20" text-anchor="middle">State results</text>
        <text x="292" y="394" font-size="22">Negative Test Results:</text>
        <text x="292" y="526" font-size="22">Positive Test Results:</text>
      </g>
      <rect y="605" width="1000" height="35" fill="#141a26" />
      <path stroke="#77b8e8" stroke-width="22" stroke-dasharray="20 12" d="M30 621h930" /><path stroke="#e3b38c" stroke-width="22" stroke-dasharray="20 76" d="M62 621h900" />
    </svg>
  </div>
</div>

<style>
  :global(body) { margin: 0; background: #0b111b; }
  .defs { position: absolute; width: 0; height: 0; }
  button { border: 0; padding: 0; margin: 0; background: none; color: inherit; font: inherit; white-space: nowrap; }
  svg { display: block; flex: none; }
  .desktop { position: relative; display: flex; flex-direction: column; min-height: 100vh; font-family: Roboto, sans-serif; }

  .menubar { display: flex; align-items: center; gap: 13px; height: 16px; padding: 0 17px 0 14px; background: linear-gradient(90deg, #1c2747, #161c33 60%, #12172a); color: #fff; font-size: 10px; font-weight: 500; }
  .apple { width: 11px; height: 11px; }
  .app { font-weight: 700; }
  .status { display: flex; align-items: center; margin-left: auto; gap: 6px; }
  .i14 { width: 14px; height: 13px; }
  .percent { font-size: 9px; }
  .battery { width: 17px; height: 10px; margin-left: -3px; }
  .clock { margin-left: 7px; }
  .user { margin: 0 5px; }
  .glyph svg { width: 12px; height: 12px; }
  .siri { margin: 0 3px; }

  .window { flex: 1; display: flex; flex-direction: column; background: #35363a; border-radius: 6px 6px 5px 5px; overflow: hidden; border-bottom: 1px solid #000; }
  .tabstrip { display: flex; align-items: flex-end; height: 30px; background: #202124; border-top: 1px solid #4b4d52; box-sizing: border-box; }
  .lights { display: flex; align-self: center; gap: 5px; width: 45px; padding-left: 9px; }
  .lights i { width: 9px; height: 9px; border-radius: 50%; background: #77797c; }
  .tab { display: flex; align-items: center; flex: 0 1 166px; min-width: 0; box-sizing: border-box; height: 24px; padding: 0 7px 0 8px; gap: 5px; color: #bdc1c6; font-size: 9px; position: relative; }
  .tab > svg { width: 11px; height: 11px; }
  .tab:not(.active)::after { content: ''; position: absolute; right: 0; top: 5px; height: 14px; width: 1px; background: #4a4c50; }
  .tab:nth-child(4)::after { display: none; }
  .tab:nth-child(4) .title { mask-image: linear-gradient(90deg, #000 84%, transparent); }
  .title { flex: 1; min-width: 0; overflow: hidden; text-align: left; }
  .close { width: 8px; height: 8px; }
  .close svg { width: 8px; height: 8px; }
  .tab.active { background: #35363a; border-radius: 5px 5px 0 0; color: #f1f3f4; }
  .plus { align-self: center; padding: 3px 0 0 10px; }
  .plus svg { width: 10px; height: 10px; }

  .toolbar { display: flex; align-items: center; height: 24px; padding: 0 10px 0 9px; }
  .nav { width: 22px; }
  .nav svg { width: 12px; height: 12px; }
  .omnibox { flex: 1; display: flex; align-items: center; height: 20px; border-radius: 10px; background: #202124; padding: 0 6px 0 9px; gap: 7px; margin-right: 9px; }
  .lock { width: 8px; height: 10px; }
  .omnibox input { flex: 1; min-width: 0; border: 0; padding: 0; outline: 0; color: transparent; font: 10px/16px Roboto, sans-serif; background: linear-gradient(90deg, #f1f3f4 113px, #9aa0a6 113px); background-clip: text; }
  .omnibox button svg { width: 12px; height: 12px; }
  .actions { display: flex; align-items: center; gap: 10px; }
  .actions svg { width: 12px; height: 12px; }
  .actions .avatar svg { width: 16px; height: 16px; }

  .bookmarks { display: grid; grid-template-columns: 48px 89px 106px 107px 107px 104px 84px 85px 1fr; align-items: center; height: 23px; padding: 0 10px 2px; border-bottom: 1px solid #55575b; box-sizing: border-box; color: #e8eaed; font-size: 9px; }
  .bookmarks a { display: flex; align-items: center; gap: 6px; color: inherit; text-decoration: none; white-space: nowrap; }
  .bookmarks svg { width: 11px; height: 11px; }

  main { position: relative; flex: 1; background: linear-gradient(#f0ffff 92%, #e6f0f0); padding-top: 14px; font-family: "Liberation Sans", Arial, sans-serif; color: #000; }
  .map { position: absolute; inset: 0; width: 100%; }
  .results { position: relative; width: 416px; margin: 0 auto; display: grid; row-gap: 36px; }
  h2 { margin: 0; font-size: 14px; line-height: 16px; }
  .value { margin: 12px 0 11px; font-size: 14px; line-height: 16px; }
  .note { margin: 0; max-width: 400px; font-size: 10px; line-height: 12px; }
  .credit { position: relative; margin: 47px 0 0; text-align: center; font-size: 7px; line-height: 10px; font-weight: bold; }
  .credit a { color: #551a8b; }

  .dock { display: flex; align-items: flex-start; height: 38px; margin: 0 25px 0 25px; padding: 0 1px; box-sizing: border-box; background: #141a26; border: 1px solid #222935; border-bottom: 0; border-radius: 3px 3px 0 0; }
  .dock button { position: relative; flex: 1; display: flex; flex-direction: column; align-items: center; padding-top: 5px; }
  .dock svg { width: 24px; height: 24px; overflow: visible; }
  .running::after { content: ''; width: 3px; height: 3px; margin-top: 4px; border-radius: 50%; background: #aeb4bd; }
  .sep { flex: 0 0 13px; height: 27px; margin-top: 5px; background: linear-gradient(#3b424d, #3b424d) center / 1px 100% no-repeat; }
  .badge { position: absolute; top: 2px; right: 0; width: 11px; height: 11px; border-radius: 50%; background: #e5453c; color: #fff; font-size: 8px; line-height: 11px; text-align: center; }

  .preview { position: absolute; right: 9px; bottom: 46px; width: 99px; border: 3px solid #000; border-radius: 4px; background: #000; box-shadow: 0 0 14px rgba(0, 0, 0, .3); }
  .preview svg { width: 100%; }
</style>
